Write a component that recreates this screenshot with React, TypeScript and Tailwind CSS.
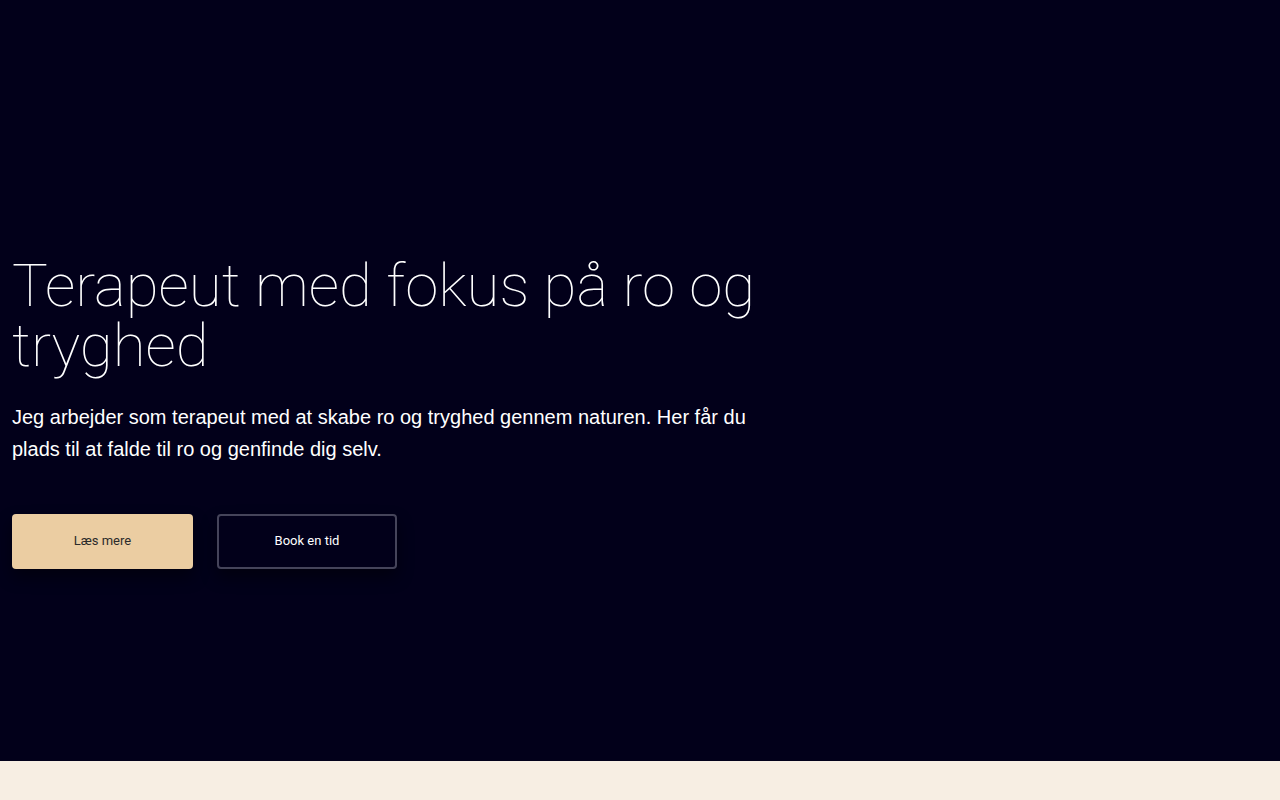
export default function App() {
  return (
    <div className="min-h-screen bg-[#f7eee3]">
      <section className="h-[761px] bg-[#02001a] flex items-center pt-16">
        <div className="max-w-3xl px-3 w-full">
          <h1 className="text-[60px] leading-[60px] font-thin text-white font-['Roboto',sans-serif]">
            Terapeut med fokus på ro og tryghed
          </h1>
          <p className="mt-[25px] text-xl leading-8 text-white font-['Liberation_Sans',Arial,sans-serif]">
            Jeg arbejder som terapeut med at skabe ro og tryghed gennem naturen. Her får du plads til at falde til ro og genfinde dig selv.
          </p>
          <div className="mt-[49px] flex gap-6 font-['Roboto',sans-serif] text-[13px]">
            <button className="w-[181px] h-[55px] pb-0.5 rounded bg-[#ebcda2] text-[#2b2b2b] shadow-[0_8px_16px_rgba(0,0,0,0.45)]">
              Læs mere
            </button>
            <button className="w-[180px] h-[55px] pb-0.5 rounded border-2 border-[#45445a] text-white shadow-[0_8px_16px_rgba(0,0,0,0.45)]">
              Book en tid
            </button>
          </div>
        </div>
      </section>
    </div>
  );
}
